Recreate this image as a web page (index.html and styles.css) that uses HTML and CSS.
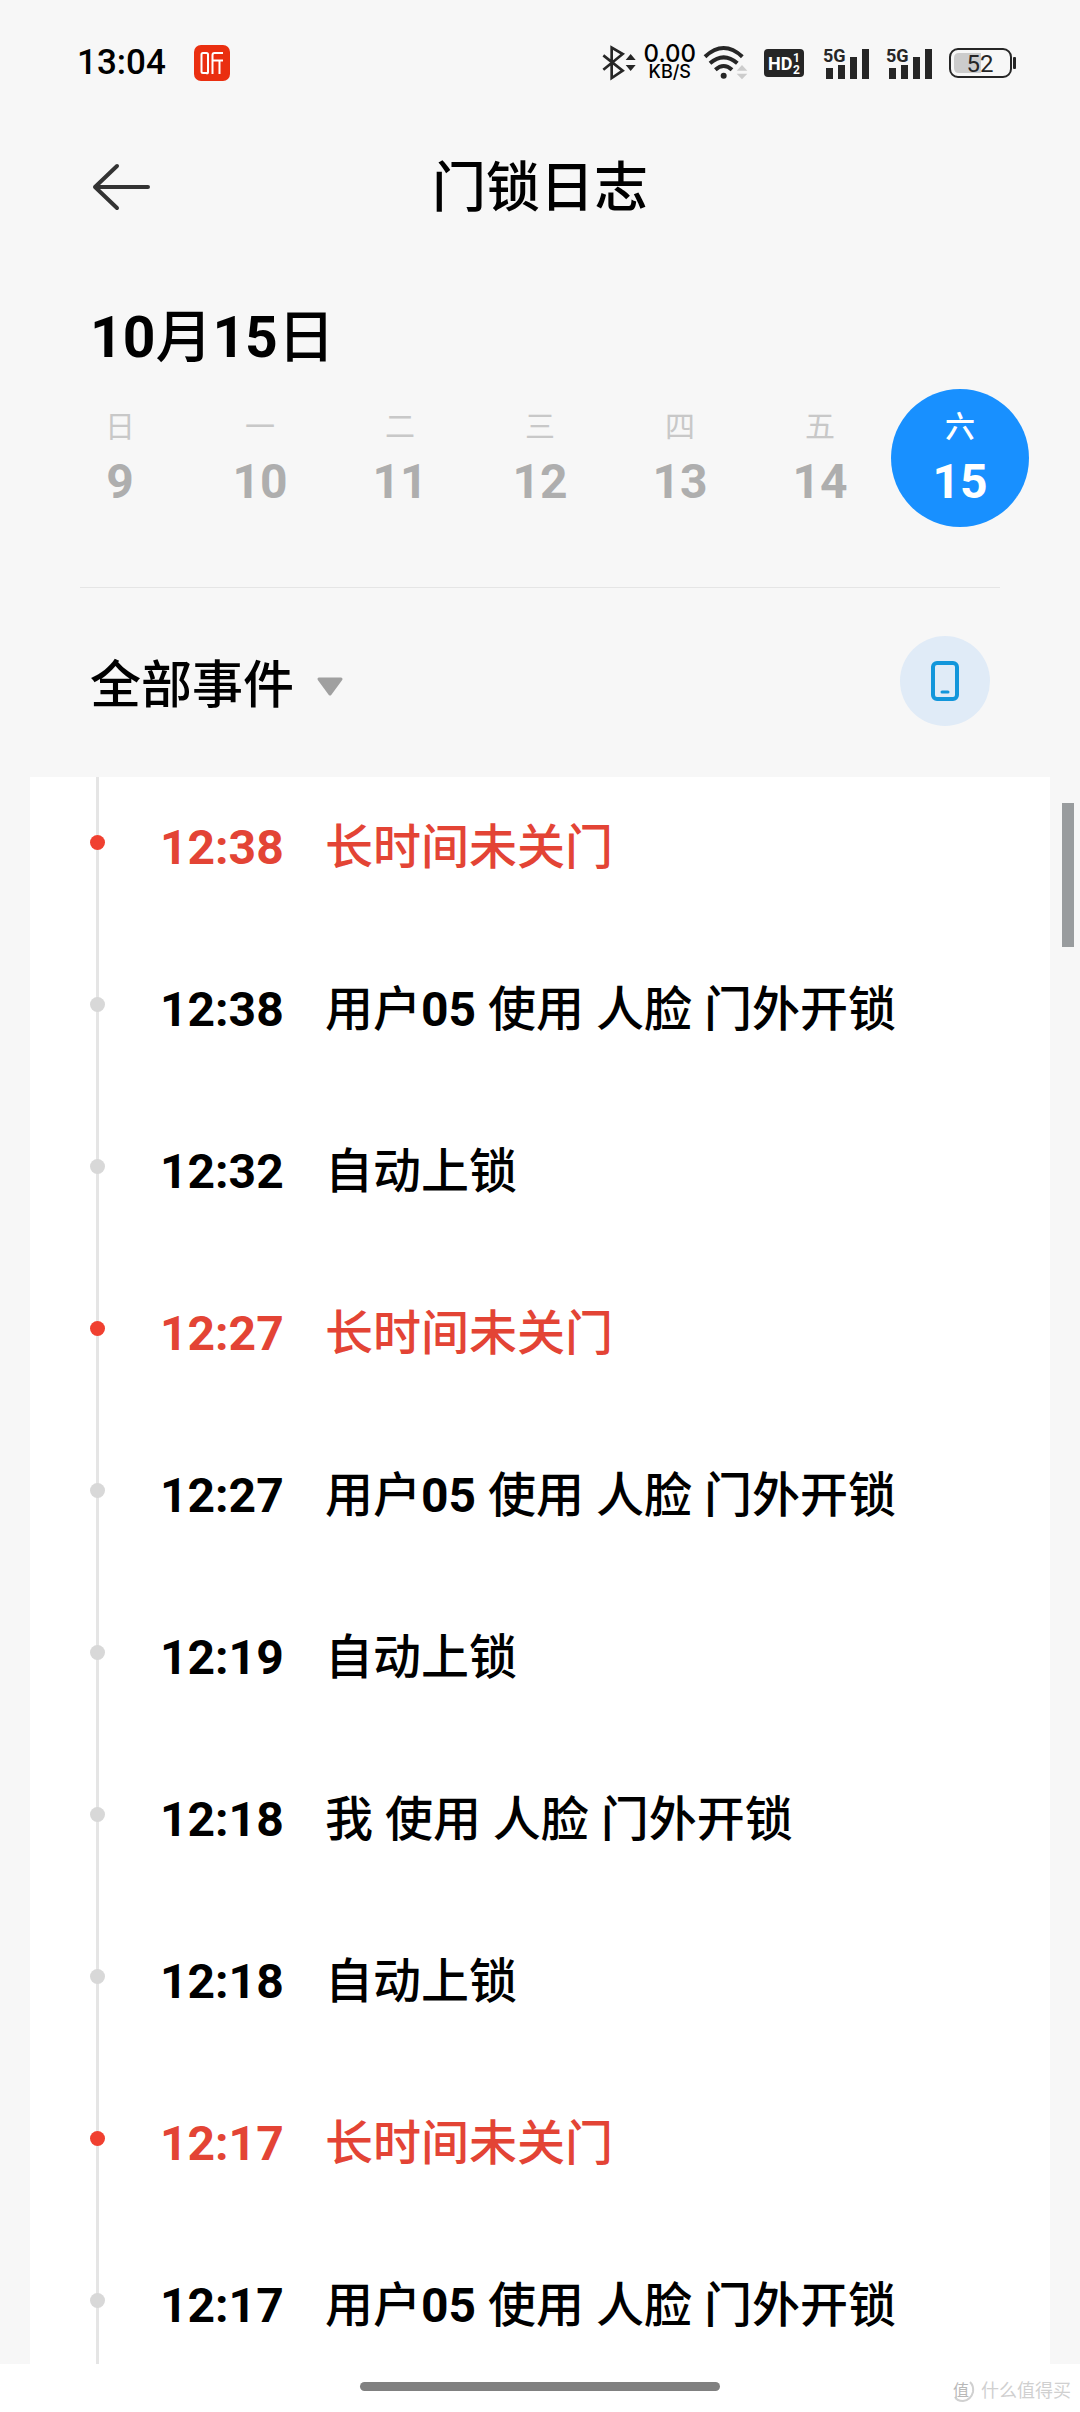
FILE: index.html
```html
<!DOCTYPE html>
<html lang="zh-CN">
<head>
    <meta charset="UTF-8">
    <meta name="viewport" content="width=device-width, initial-scale=1">
    <title>门锁日志</title>
    <link rel="stylesheet" href="styles.css">
</head>
<body>
<div class="status">
    <span class="clock">13:04</span>
    <svg class="app" width="36" height="36" viewBox="0 0 36 36">
        <rect width="36" height="36" rx="7" fill="#ea2f10"/>
        <g fill="none" stroke="#fff" stroke-width="2">
            <path d="M13 28H9q-1.500 0-1.500-1.500V9.500Q7.500 8 9 8h3.500q1.500 0 1.500 1.500V27q0 1.500-1.500 1.500"/>
            <path d="M29 8h-8.500q-2 0-2 2v19M18.500 15.500H29M25.500 15.500V29"/>
        </g>
    </svg>
    <div class="status_right">
        <div class="net">
            <svg width="35" height="34" viewBox="68 76 105 102">
                <path d="M72 104l58 46-33 22V81l33 19-58 47" fill="none" stroke="#262626" stroke-width="8"/>
                <path d="M139 118l15-18 15 18zM139 133l15 18 15-18z" fill="#262626"/>
            </svg>
            <div class="speed"><span>0.00</span><small>KB/S</small></div>
            <svg width="45" height="34" viewBox="378 74 135 102">
                <g fill="none" stroke="#262626" stroke-width="12">
                    <path d="M384 106q56-52 112 0"/>
                    <path d="M399 126q41-36 82 0"/>
                    <path d="M415 145q25-22 50 0"/>
                </g>
                <circle cx="440" cy="163" r="9" fill="#262626"/>
                <path d="M479 148l16-17 16 17zM479 157l16 17 16-17z" fill="#ccc"/>
            </svg>
        </div>
        <svg width="43" height="28" viewBox="0 0 43 28">
            <rect width="40" height="28" rx="4" fill="#262626"/>
            <text class="hd" x="4" y="21">HD</text>
            <text class="hd_num" x="29" y="13">1</text>
            <text class="hd_num" x="29" y="25">2</text>
        </svg>
        <svg width="47" height="34" viewBox="0 0 47 34">
            <text class="net_type" x="0" y="16">5G</text>
            <path d="M3 22h7v11H3zM15 19h7v14h-7zM27 11h7v22h-7zM39 3h7v30h-7z" fill="#262626"/>
        </svg>
        <svg width="47" height="34" viewBox="0 0 47 34">
            <text class="net_type" x="0" y="16">5G</text>
            <path d="M3 22h7v11H3zM15 19h7v14h-7zM27 11h7v22h-7zM39 3h7v30h-7z" fill="#262626"/>
        </svg>
        <svg width="67" height="30" viewBox="0 0 67 30">
            <rect x="1" y="1" width="61" height="28" rx="8" fill="none" stroke="#262626" stroke-width="2"/>
            <path d="M10 5h22v20H10q-5 0-5-5V10q0-5 5-5z" fill="#ccc"/>
            <rect x="64" y="9" width="3" height="12" rx="1" fill="#262626"/>
            <text class="battery" x="31" y="24">52</text>
        </svg>
    </div>
</div>

<header class="header">
    <a class="back" href="#" aria-label="返回">
        <svg width="60" height="48" viewBox="0 0 60 48">
            <path d="M27 3L5 24l22 21M5 24h53" fill="none" stroke="#333" stroke-width="4" stroke-linecap="round" stroke-linejoin="round"/>
        </svg>
    </a>
    <h1>门锁日志</h1>
</header>

<main>
    <h2 class="date"><b>10</b>月<b>15</b>日</h2>
    <div class="week">
        <button class="day" type="button"><span>日</span><b>9</b></button>
        <button class="day" type="button"><span>一</span><b>10</b></button>
        <button class="day" type="button"><span>二</span><b>11</b></button>
        <button class="day" type="button"><span>三</span><b>12</b></button>
        <button class="day" type="button"><span>四</span><b>13</b></button>
        <button class="day" type="button"><span>五</span><b>14</b></button>
        <button class="day current" type="button"><span>六</span><b>15</b></button>
    </div>
    <hr class="line">

    <div class="filter">
        <label class="filter_type">
            <select aria-label="事件类型">
                <option>全部事件</option>
            </select>
            <svg width="26" height="19" viewBox="0 0 26 19">
                <path d="M2 2h22L13 17z" fill="#a0a0a0" stroke="#a0a0a0" stroke-width="3" stroke-linejoin="round"/>
            </svg>
        </label>
        <button class="phone" type="button" aria-label="手机">
            <svg width="28" height="40" viewBox="0 0 28 40">
                <rect x="2" y="2" width="24" height="36" rx="4" fill="none" stroke="#1296db" stroke-width="4"/>
                <path d="M11 31h6" stroke="#1296db" stroke-width="3" stroke-linecap="round"/>
            </svg>
        </button>
    </div>

    <div class="log">
        <ol class="log_list">
            <li class="warn"><i></i><time>12:38</time><span>长时间未关门</span></li>
            <li><i></i><time>12:38</time><span>用户<b>05</b> 使用 人脸 门外开锁</span></li>
            <li><i></i><time>12:32</time><span>自动上锁</span></li>
            <li class="warn"><i></i><time>12:27</time><span>长时间未关门</span></li>
            <li><i></i><time>12:27</time><span>用户<b>05</b> 使用 人脸 门外开锁</span></li>
            <li><i></i><time>12:19</time><span>自动上锁</span></li>
            <li><i></i><time>12:18</time><span>我 使用 人脸 门外开锁</span></li>
            <li><i></i><time>12:18</time><span>自动上锁</span></li>
            <li class="warn"><i></i><time>12:17</time><span>长时间未关门</span></li>
            <li><i></i><time>12:17</time><span>用户<b>05</b> 使用 人脸 门外开锁</span></li>
        </ol>
        <div class="scrollbar"></div>
    </div>
</main>

<footer class="footer">
    <div class="handle"></div>
    <div class="mark">
        <svg width="24" height="24" viewBox="0 0 24 24">
            <path d="M19 3q4 4 3 10-2 8-10 9-6 0-8-4" fill="none" stroke="#d0d0d0" stroke-width="2"/>
            <text class="mark_logo" x="2" y="17">值</text>
        </svg>
        <span>什么值得买</span>
    </div>
</footer>
</body>
</html>
```

FILE: styles.css
```css
*{
    margin: 0;
    padding: 0;
    box-sizing: border-box;
    list-style: none;
    border: none;
}
body{
    background-color: #f7f7f7;
    color: #000;
    font-family: Roboto, "Noto Sans CJK SC", sans-serif;
    font-weight: 500;
}
svg{
    display: block;
    flex: none;
    overflow: visible;
}
button, select{
    background: none;
    color: inherit;
    font: inherit;
    cursor: pointer;
}
b, time{
    font-weight: 700;
}

/* 状态栏 */
.status{
    display: flex;
    align-items: center;
    height: 126px;
    padding: 0 64px 0 77px;
}
.clock{
    font-size: 35px;
    line-height: 48px;
}
.app{
    margin-left: 28px;
}
.status_right{
    display: flex;
    align-items: center;
    gap: 16px;
    margin-left: auto;
}
.net{
    display: flex;
    align-items: center;
    gap: 7px;
}
.speed{
    display: flex;
    flex-direction: column;
    align-items: center;
    font-family: Inter, sans-serif;
    font-size: 24px;
    font-weight: 500;
    line-height: 18px;
}
.speed small{
    font-size: 18px;
}
.hd{
    fill: #fff;
    font: bold 18px Roboto, sans-serif;
}
.hd_num{
    fill: #fff;
    font: bold 12px Roboto, sans-serif;
}
.net_type{
    fill: #262626;
    font: bold 18px Roboto, sans-serif;
}
.battery{
    fill: #262626;
    font: 24px Roboto, sans-serif;
    text-anchor: middle;
}

/* 标题 */
.header{
    display: grid;
    grid-template-columns: 1fr auto 1fr;
    align-items: center;
    height: 120px;
    padding: 2px 90px 0;
}
.header h1{
    padding-top: 4px;
    font-size: 54px;
    font-weight: 500;
    line-height: 80px;
}
.back{
    justify-self: start;
}

/* 日期 */
.date{
    margin-top: 47px;
    padding: 0 90px;
    font-size: 57px;
    font-weight: 500;
    line-height: 90px;
}
.week{
    display: grid;
    grid-template-columns: repeat(7, 1fr);
    justify-items: center;
    margin-top: 6px;
    padding: 0 50px;
}
.day{
    display: flex;
    flex-direction: column;
    align-items: center;
    gap: 9px;
    width: 138px;
    height: 138px;
    padding-top: 20px;
    border-radius: 50%;
    color: #aeaeae;
}
.day span{
    color: #c8c8c8;
    font-size: 30px;
    font-weight: 400;
    line-height: 36px;
}
.day b{
    font-size: 48px;
    line-height: 56px;
}
.current, .current span{
    color: #fff;
}
.current{
    background-color: #1890ff;
}
.current span{
    font-weight: 500;
}
.line{
    height: 1px;
    margin: 60px 80px 0;
    background-color: #e5e5e5;
}

/* 筛选 */
.filter{
    display: flex;
    align-items: center;
    justify-content: space-between;
    padding: 48px 90px 51px;
}
.filter_type{
    display: flex;
    align-items: center;
    gap: 22px;
    padding-top: 10px;
}
.filter_type select{
    appearance: none;
    font-size: 51px;
    line-height: 76px;
}
.phone{
    display: flex;
    align-items: center;
    justify-content: center;
    width: 90px;
    height: 90px;
    border-radius: 50%;
    background-color: #e0ebf7;
}

/* 日志 */
.log{
    position: relative;
    padding: 0 30px;
}
.log_list{
    display: flex;
    flex-direction: column;
    gap: 90px;
    padding: 35px 60px 22px;
    background: #fff linear-gradient(#e5e5e5, #e5e5e5) 66px 0 / 3px 100% no-repeat;
}
.log_list li{
    display: flex;
    align-items: center;
    font-size: 48px;
    line-height: 72px;
}
.log_list i{
    width: 15px;
    height: 15px;
    margin-bottom: 12px;
    border-radius: 50%;
    background-color: #d8d8d8;
}
.log_list time{
    width: 165px;
    margin-left: 55px;
}
.log_list .warn{
    color: #e34435;
}
.log_list .warn i{
    background-color: #f04030;
}
.scrollbar{
    position: absolute;
    top: 26px;
    right: 6px;
    width: 12px;
    height: 144px;
    background-color: #999c9e;
}

/* 底部 */
.footer{
    display: grid;
    grid-template-columns: 1fr 360px 1fr;
    align-items: center;
    height: 48px;
    padding: 0 9px;
    background-color: #fff;
}
.handle{
    grid-column: 2;
    height: 9px;
    margin-bottom: 3px;
    border-radius: 5px;
    background-color: #808080;
}
.mark{
    display: flex;
    align-items: center;
    justify-self: end;
    gap: 6px;
    padding-top: 5px;
    color: #d0d0d0;
    font-size: 18px;
    font-weight: 400;
    line-height: 24px;
}
.mark_logo{
    fill: #b8b8b8;
    font-size: 16px;
}
```
